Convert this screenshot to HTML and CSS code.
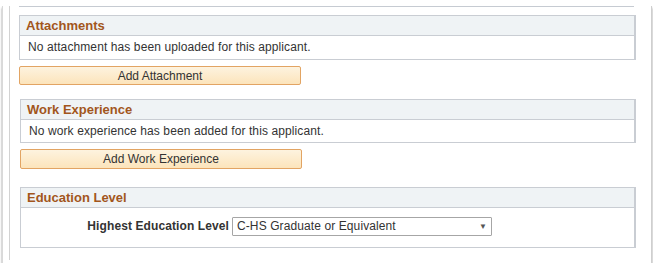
FILE: index.html
```html
<!DOCTYPE html>
<html lang="en">
<head>
  <meta charset="UTF-8">
  <title>Applicant Details</title>
  <link rel="stylesheet" href="styles.css">
</head>
<body>
  <div class="window">
    <div class="frame">
      <div class="page">
        <div class="top-rule"></div>

        <div class="group group-attach">
          <div class="group-label">Attachments</div>
          <div class="group-body">No attachment has been uploaded for this applicant.</div>
        </div>
        <button class="push-btn">Add Attachment</button>

        <div class="group group-work">
          <div class="group-label">Work Experience</div>
          <div class="group-body">No work experience has been added for this applicant.</div>
        </div>
        <button class="push-btn">Add Work Experience</button>

        <div class="group group-edu">
          <div class="group-label">Education Level</div>
          <div class="group-body edu-body">
            <label class="field-label">Highest Education Level</label>
            <div class="select">
              <span>C-HS Graduate or Equivalent</span>
              <span class="arrow">&#9660;</span>
            </div>
          </div>
        </div>
      </div>
    </div>
  </div>
</body>
</html>
```

FILE: styles.css
```css
body {
  margin: 0;
  padding: 0;
  background: #fff;
  font-family: 'Liberation Sans', Arial, sans-serif;
  color: #333;
}

.window {
  margin-left: 2px;
  width: 648px;
  height: 257px;
  border-left: 1px solid #d9d9d9;
  border-right: 1px solid #cfcfcf;
  box-shadow: 0 2px 2px rgba(0, 0, 0, 0.45);
  background: #fff;
}

.frame {
  margin-left: 6px;
  height: 254px;
  border-left: 1px solid #d2d2d2;
}

.page {
  padding-left: 10px;
  width: 616px;
}

.top-rule {
  margin-top: 6px;
  margin-left: -1px;
  width: 615px;
  height: 1px;
  background: #c6cbd2;
}

.group {
  border: 1px solid #c9cdd3;
  border-right-width: 2px;
}

.group-label {
  height: 19px;
  line-height: 19px;
  padding-left: 6px;
  background: #eff3f5;
  border-bottom: 1px solid #c9cdd3;
  color: #a2561c;
  font-weight: bold;
  font-size: 13px;
}

.group-body {
  height: 23px;
  line-height: 23px;
  padding-left: 8px;
  font-size: 12px;
  letter-spacing: 0.1px;
  color: #333;
}

.group-attach {
  margin-top: 8px;
  margin-left: -1px;
}

.push-btn {
  display: block;
  margin-top: 6px;
  width: 282px;
  height: 19px;
  padding: 0;
  border: 1px solid #e2a463;
  border-radius: 2px;
  background: linear-gradient(to bottom, #fdf3df 0%, #fce4bb 100%);
  font-family: 'Liberation Sans', Arial, sans-serif;
  font-size: 12px;
  color: #333;
}

.group-attach + .push-btn {
  margin-left: -1px;
}

.group-work {
  margin-top: 14px;
}

.group-work .group-body {
  height: 22px;
  line-height: 22px;
}

.group-work + .push-btn {
  height: 20px;
}

.group-edu {
  margin-top: 18px;
}

.edu-body {
  height: 39px;
  display: flex;
  align-items: flex-start;
  padding-left: 0;
  padding-top: 9px;
  box-sizing: border-box;
}

.field-label {
  width: 208px;
  text-align: right;
  font-weight: bold;
  font-size: 12px;
  line-height: 19px;
  margin-right: 3px;
}

.select {
  width: 250px;
  height: 17px;
  border: 1px solid #a6a6a6;
  border-radius: 1px;
  display: flex;
  justify-content: space-between;
  align-items: center;
  padding: 0 4px 0 4px;
  font-size: 12px;
  line-height: 17px;
  color: #333;
}

.arrow {
  font-size: 8px;
  color: #555;
}
```
